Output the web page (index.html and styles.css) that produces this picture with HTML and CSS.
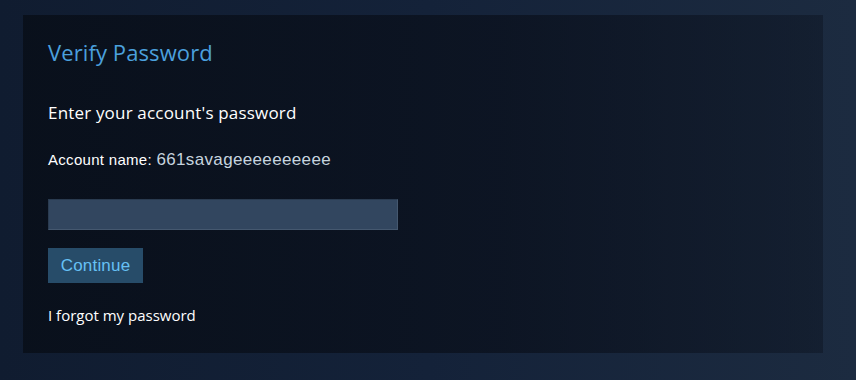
FILE: index.html
```html
<!DOCTYPE html>
<html>
<head>
<meta charset="utf-8">
<link rel="stylesheet" href="styles.css">
</head>
<body>
<div class="page">
  <div class="panel">
    <h1 class="title">Verify Password</h1>
    <div class="prompt">Enter your account's password</div>
    <div class="account"><span class="label">Account name:</span> <span class="value">661savageeeeeeeeee</span></div>
    <input class="pwd" type="password">
    <div><button class="btn">Continue</button></div>
    <a class="forgot">I forgot my password</a>
  </div>
</div>
</body>
</html>
```
FILE: styles.css
```css
html, body {
  margin: 0;
  padding: 0;
  width: 856px;
  height: 380px;
  overflow: hidden;
}
body {
  background: linear-gradient(90deg, #101c30 0%, #142239 50%, #1c2b40 100%);
  font-family: "Open Sans", "Noto Sans", sans-serif;
}
.page {
  padding: 15px 33px 0 23px;
}
.panel {
  width: 800px;
  height: 338px;
  box-sizing: border-box;
  background: linear-gradient(90deg, rgba(8,14,24,0.85) 0%, rgba(10,16,28,0.75) 60%, rgba(14,22,36,0.55) 100%);
  padding: 22px 25px 0 25px;
}
.title {
  margin: 0;
  font-weight: normal;
  font-size: 22px;
  line-height: 30px;
  letter-spacing: 0.1px;
  color: #4ba0dd;
}
.prompt {
  margin-top: 34px;
  font-size: 17px;
  line-height: 24px;
  letter-spacing: 0.18px;
  color: #ffffff;
}
.account {
  margin-top: 25px;
  font-family: "Liberation Sans", Arial, sans-serif;
  color: #ffffff;
  line-height: 20px;
}
.label { font-size: 15px; letter-spacing: 0.3px; }
.value { font-size: 17px; letter-spacing: 0.35px; color: #c6d4df; }
.pwd {
  display: block;
  margin-top: 29px;
  width: 350px;
  height: 31px;
  box-sizing: border-box;
  background: #32465f;
  border: 1px solid #45586f;
  border-top-color: #2a3b50;
  border-left-color: #2a3b50;
  outline: none;
  padding: 0;
}
.btn {
  margin-top: 18px;
  width: 95px;
  height: 35px;
  background: #274c69;
  border: none;
  color: #66c0f4;
  font-family: "Liberation Sans", Arial, sans-serif;
  font-size: 17px;
  letter-spacing: 0.2px;
  padding: 0;
}
.forgot {
  display: block;
  margin-top: 23px;
  color: #ffffff;
  font-size: 15px;
  line-height: 18px;
}
```
